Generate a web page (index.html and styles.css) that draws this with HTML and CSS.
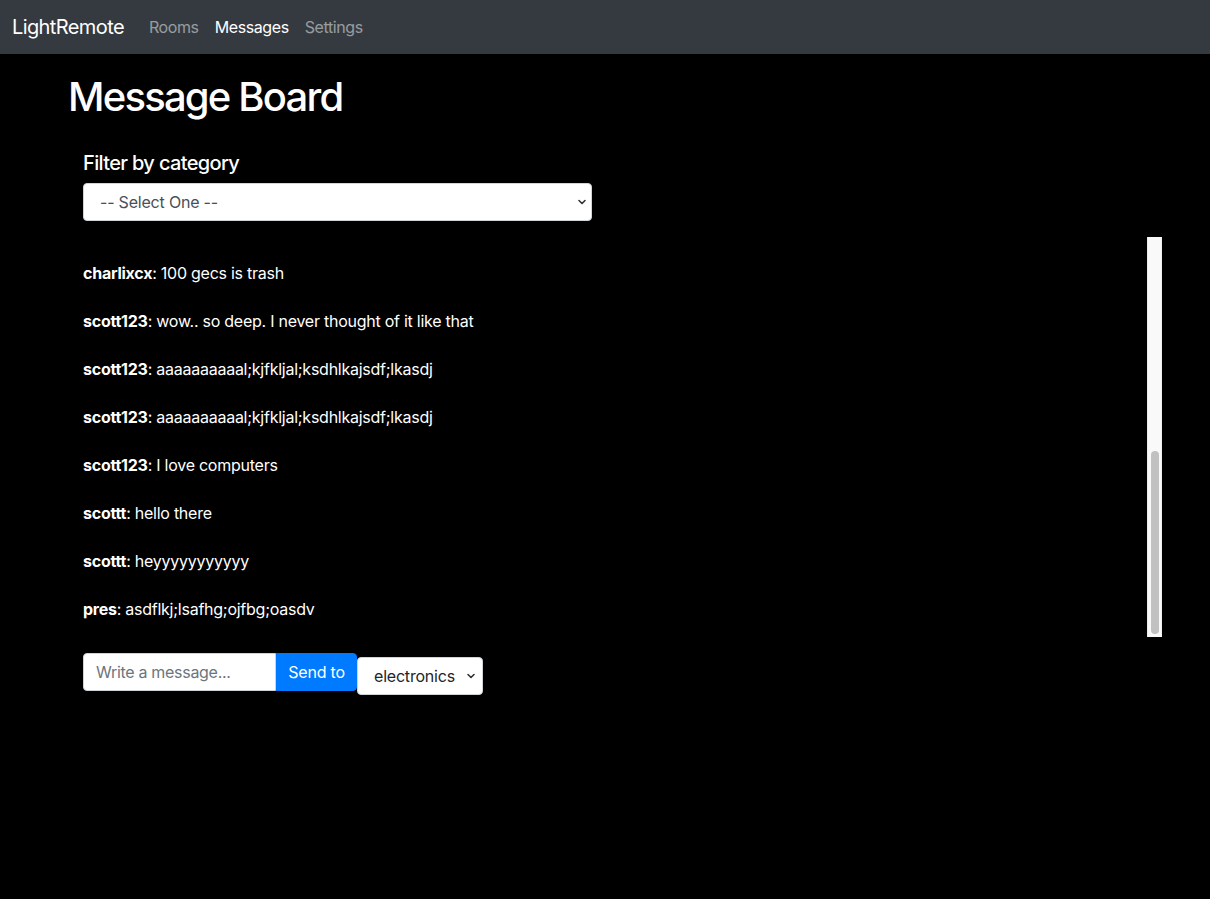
FILE: index.html
```html
<!DOCTYPE html>
<html lang="en">
<head>
<meta charset="utf-8">
<title>LightRemote - Message Board</title>
<link rel="stylesheet" href="styles.css">
</head>
<body>
<nav class="navbar">
  <a class="brand" href="#">LightRemote</a>
  <ul class="nav">
    <li><a class="nav-link" href="#">Rooms</a></li>
    <li><a class="nav-link active" href="#">Messages</a></li>
    <li><a class="nav-link" href="#">Settings</a></li>
  </ul>
</nav>
<main class="page">
  <h1 class="title">Message Board</h1>
  <section class="board">
    <label class="filter-label" for="category">Filter by category</label>
    <select class="filter-select" id="category">
      <option>-- Select One --</option>
      <option>electronics</option>
    </select>
    <div class="messages-wrap">
      <div class="messages">
        <p class="msg"><b>charlixcx</b>: 100 gecs is trash</p>
        <p class="msg"><b>scott123</b>: wow.. so deep. I never thought of it like that</p>
        <p class="msg"><b>scott123</b>: aaaaaaaaaal;kjfkljal;ksdhlkajsdf;lkasdj</p>
        <p class="msg"><b>scott123</b>: aaaaaaaaaal;kjfkljal;ksdhlkajsdf;lkasdj</p>
        <p class="msg"><b>scott123</b>: I love computers</p>
        <p class="msg"><b>scottt</b>: hello there</p>
        <p class="msg"><b>scottt</b>: heyyyyyyyyyyy</p>
        <p class="msg"><b>pres</b>: asdflkj;lsafhg;ojfbg;oasdv</p>
      </div>
      <div class="scrollbar" aria-hidden="true">
        <div class="scrollbar-thumb"></div>
      </div>
    </div>
    <form class="composer">
      <input class="composer-input" type="text" placeholder="Write a message...">
      <button class="composer-btn" type="button">Send to</button>
      <select class="composer-select">
        <option>electronics</option>
      </select>
    </form>
  </section>
</main>
</body>
</html>
```
FILE: styles.css
```css
* { box-sizing: border-box; }
html, body { margin: 0; padding: 0; }
body {
  background: #000;
  color: #fff;
  font-family: Inter, "Liberation Sans", sans-serif;
  font-size: 16px;
  line-height: 24px;
  letter-spacing: -0.25px;
}
.navbar {
  height: 54px;
  background: #343a40;
  display: flex;
  align-items: center;
  padding: 0 12px;
}
.brand {
  color: #fff;
  text-decoration: none;
  font-size: 20px;
  letter-spacing: -0.6px;
  margin-right: 17px;
}
.nav {
  display: flex;
  list-style: none;
  margin: 0;
  padding: 0;
}
.nav-link {
  display: block;
  padding: 0 8px;
  color: rgba(255,255,255,.5);
  text-decoration: none;
  font-size: 16px;
  letter-spacing: -0.4px;
}
.nav-link.active { color: #fff; }
.page {
  padding: 0 48px 0 68px;
}
.title {
  margin: 19px 0 0;
  font-size: 40px;
  line-height: 48px;
  font-weight: 500;
  letter-spacing: -1.8px;
}
.board {
  padding-left: 15px;
  display: flex;
  flex-direction: column;
  align-items: flex-start;
}
.filter-label {
  margin-top: 30px;
  margin-bottom: 8px;
  font-size: 20px;
  font-weight: 500;
  line-height: 24px;
  letter-spacing: -0.65px;
}
.filter-select, .composer-select {
  appearance: none;
  -webkit-appearance: none;
  background: #fff url("data:image/svg+xml;utf8,<svg xmlns='http://www.w3.org/2000/svg' width='10' height='10' viewBox='0 0 10 10'><path d='M2 3.5 L5 6.5 L8 3.5' fill='none' stroke='%23333' stroke-width='1.6' stroke-linecap='round' stroke-linejoin='round'/></svg>") no-repeat right 4px center;
  border: 1px solid #ced4da;
  border-radius: 4px;
  color: #495057;
  font-family: inherit;
  font-size: 16px;
  letter-spacing: -0.2px;
}
.filter-select {
  width: 509px;
  height: 38px;
  padding: 0 16px;
}
.messages-wrap {
  margin-top: 16px;
  width: 100%;
  height: 400px;
  display: flex;
}
.messages {
  flex: 1;
  overflow: hidden;
  padding-top: 16px;
}
.scrollbar {
  width: 15px;
  background: #f9f9f9;
  border-left: 1px solid #ececec;
  border-right: 1px solid #f1f1f1;
  display: flex;
  flex-direction: column;
  justify-content: flex-end;
  align-items: center;
  padding-bottom: 3px;
}
.scrollbar-thumb {
  width: 8px;
  height: 183px;
  border-radius: 4px;
  background: #c1c1c1;
}
.msg {
  margin: 0 0 16px;
  padding-top: 8px;
}
.msg b { font-weight: 700; }
.composer {
  margin-top: 16px;
  display: flex;
  align-items: flex-start;
}
.composer-input {
  width: 193px;
  height: 38px;
  border: 1px solid #ced4da;
  border-radius: 4px 0 0 4px;
  padding: 0 12px;
  font-family: inherit;
  font-size: 16px;
  letter-spacing: -0.3px;
  color: #495057;
}
.composer-input::placeholder { color: #6c757d; }
.composer-btn {
  height: 38px;
  width: 81px;
  background: #007bff;
  color: #fff;
  border: 1px solid #007bff;
  border-radius: 0 4px 4px 0;
  font-family: inherit;
  font-size: 16px;
  letter-spacing: -0.2px;
  padding: 0;
}
.composer-select {
  margin-top: 4px;
  width: 126px;
  height: 38px;
  padding: 0 16px;
  color: #212529;
  background-position: right 6px center;
}
```
